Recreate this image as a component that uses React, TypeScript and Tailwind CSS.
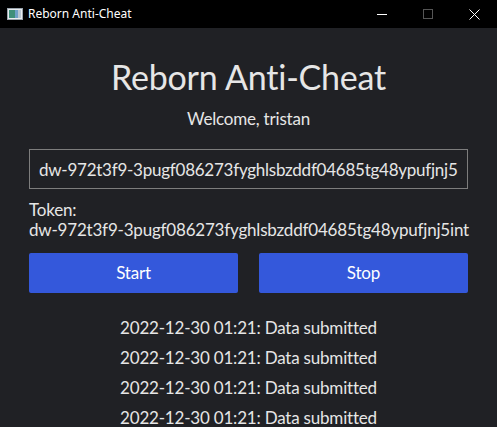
import React, { useState } from 'react'

const token = 'dw-972t3f9-3pugf086273fyghlsbzddf04685tg48ypufjnj5int'

const AppIcon: React.FC = () => (
  <svg width="16" height="12" viewBox="0 0 16 12">
    <rect x="0.5" y="0.5" width="15" height="11" fill="#e8ecef" stroke="#9aa4ad" />
    <rect x="2" y="2" width="6" height="8" fill="#3f8f7a" />
    <rect x="8" y="2" width="3" height="8" fill="#6fa0c8" />
    <rect x="11" y="2" width="3" height="8" fill="#b9c6d2" />
  </svg>
)

const App: React.FC = () => {
  const [logs] = useState([
    '2022-12-30 01:21: Data submitted',
    '2022-12-30 01:21: Data submitted',
    '2022-12-30 01:21: Data submitted',
    '2022-12-30 01:21: Data submitted',
  ])

  return (
    <div className="w-[497px] h-[427px] overflow-hidden flex flex-col bg-[#202125]">
      {/* Title bar */}
      <div className="h-[28px] shrink-0 bg-black flex items-center text-white">
        <div className="pl-[7px] pr-[5px] flex items-center">
          <AppIcon />
        </div>
        <span className="text-[12px] font-['Noto_Sans',sans-serif] leading-none">Reborn Anti-Cheat</span>
        <div className="ml-auto flex h-full">
          <div className="w-[46px] h-full flex items-center justify-center">
            <div className="w-[10px] h-px bg-white" />
          </div>
          <div className="w-[46px] h-full flex items-center justify-center">
            <div className="w-[10px] h-[10px] border border-[#555]" />
          </div>
          <div className="w-[46px] h-full flex items-center justify-center">
            <svg width="11" height="11" viewBox="0 0 11 11">
              <path d="M0.5 0.5 L10.5 10.5 M10.5 0.5 L0.5 10.5" stroke="#fff" strokeWidth="1" />
            </svg>
          </div>
        </div>
      </div>

      {/* Main */}
      <div className="flex-1 px-[29px] pt-[28px] font-['Lato',sans-serif] text-[#e6e6e6] tracking-[-0.2px] overflow-hidden">
        <h1 className="text-[34px] leading-[42px] text-center">Reborn Anti-Cheat</h1>
        <p className="mt-[10px] text-[17px] leading-[22px] text-center">Welcome, tristan</p>

        <input
          readOnly
          value={token}
          className="mt-[19px] w-full h-[40px] px-[9px] bg-transparent border border-[#7d7d7d] text-[17px] text-[#e6e6e6] tracking-[-0.25px] outline-none font-['Lato',sans-serif]"
        />

        <p className="mt-[11px] text-[17px] leading-[20px] whitespace-nowrap">
          Token:
          <br />
          {token}
        </p>

        <div className="mt-[13px] flex gap-[21px]">
          <button className="flex-1 h-[40px] rounded-[2px] bg-[#3458db] text-white text-[17px]">Start</button>
          <button className="flex-1 h-[40px] rounded-[2px] bg-[#3458db] text-white text-[17px]">Stop</button>
        </div>

        <ul className="mt-[20px] text-center text-[17px] leading-[30px]">
          {logs.map((log, i) => (
            <li key={i}>{log}</li>
          ))}
        </ul>
      </div>
    </div>
  )
}

export default App
